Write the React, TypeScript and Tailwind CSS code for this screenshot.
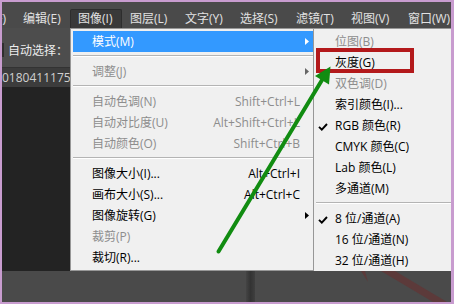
import React from 'react';

type Entry =
  | { t: 'sep' }
  | { t: 'item'; label: string; sc?: string; dis?: boolean; arrow?: boolean; active?: boolean; check?: boolean };

const mainItems: Entry[] = [
  { t: 'item', label: '模式(M)', arrow: true, active: true },
  { t: 'sep' },
  { t: 'item', label: '调整(J)', arrow: true, dis: true },
  { t: 'sep' },
  { t: 'item', label: '自动色调(N)', sc: 'Shift+Ctrl+L', dis: true },
  { t: 'item', label: '自动对比度(U)', sc: 'Alt+Shift+Ctrl+L', dis: true },
  { t: 'item', label: '自动颜色(O)', sc: 'Shift+Ctrl+B', dis: true },
  { t: 'sep' },
  { t: 'item', label: '图像大小(I)...', sc: 'Alt+Ctrl+I' },
  { t: 'item', label: '画布大小(S)...', sc: 'Alt+Ctrl+C' },
  { t: 'item', label: '图像旋转(G)', arrow: true },
  { t: 'item', label: '裁剪(P)', dis: true },
  { t: 'item', label: '裁切(R)...' },
];

const subItems: Entry[] = [
  { t: 'item', label: '位图(B)', dis: true },
  { t: 'item', label: '灰度(G)' },
  { t: 'item', label: '双色调(D)', dis: true },
  { t: 'item', label: '索引颜色(I)...' },
  { t: 'item', label: 'RGB 颜色(R)', check: true },
  { t: 'item', label: 'CMYK 颜色(C)' },
  { t: 'item', label: 'Lab 颜色(L)' },
  { t: 'item', label: '多通道(M)' },
  { t: 'sep' },
  { t: 'item', label: '8 位/通道(A)', check: true },
  { t: 'item', label: '16 位/通道(N)' },
  { t: 'item', label: '32 位/通道(H)' },
];

const menuBar: { label: string; w: string; hover?: boolean }[] = [
  { label: '编辑(E)', w: 'w-[55px]' },
  { label: '图像(I)', w: 'w-[52px]', hover: true },
  { label: '图层(L)', w: 'w-[55px]' },
  { label: '文字(Y)', w: 'w-[55px]' },
  { label: '选择(S)', w: 'w-[56px]' },
  { label: '滤镜(T)', w: 'w-[55px]' },
  { label: '视图(V)', w: 'w-[57px]' },
];

function Arrow({ color }: { color: string }) {
  return (
    <svg width="4" height="7" viewBox="0 0 4 7" className="block">
      <path d="M0 0 L4 3.5 L0 7 Z" fill={color} />
    </svg>
  );
}

function Check() {
  return (
    <svg width="10" height="8" viewBox="0 0 10 8" className="block mt-[3px]">
      <path d="M1 3.8 L3.8 6.6 L9 1" stroke="#000" strokeWidth="1.9" fill="none" />
    </svg>
  );
}

function Sep() {
  return (
    <div className="h-[9px] pt-[3px]">
      <div className="h-px bg-[#b4b4b4]" />
      <div className="h-px bg-white" />
    </div>
  );
}

export default function App() {
  return (
    <div className="relative w-[454px] h-[304px] bg-[#c89ccf] pt-[2px] pl-[2px] pr-[3px] pb-[2px] font-['Open_Sans','Noto_Sans_CJK_SC',sans-serif] text-[12px] leading-[16px] overflow-hidden">
      <div className="w-full h-full flex flex-col bg-[#222222] overflow-hidden">
        {/* menu bar */}
        <div className="h-[26px] shrink-0 bg-[#4a4a4a] flex items-end text-[#e2e2e2] overflow-hidden">
          <div className="w-[13px] h-[19px] shrink-0 overflow-hidden flex justify-end items-center">
            <span className="whitespace-nowrap shrink-0 pr-[9px]">文件(F)</span>
          </div>
          {menuBar.map((m) => (
            <div
              key={m.label}
              className={`${m.w} h-[19px] shrink-0 flex items-center whitespace-nowrap ${
                m.hover ? 'bg-[#393939] border border-b-0 border-[#2d2d2d] rounded-t-[2px] pl-[7px]' : 'pl-[8px]'
              }`}
            >
              {m.label}
            </div>
          ))}
          <div className="flex-1 min-w-0 h-[19px] flex items-center whitespace-nowrap pl-[8px] overflow-hidden">
            窗口(W)
          </div>
        </div>
        {/* options bar */}
        <div className="h-[39px] shrink-0 bg-[#4d4d4d] flex items-start pt-[15px] text-[#ececec]">
          <div className="w-[2px] h-[14px] bg-[#2e2e2e] mr-[4px]" />
          <span className="whitespace-nowrap">自动选择：</span>
        </div>
        {/* tab row */}
        <div className="h-[20px] shrink-0 bg-[#3c3c3c] border-t border-[#333333] flex items-center text-[#cfcfcf]">
          <span className="whitespace-nowrap">0180411175</span>
        </div>
        {/* canvas */}
        <div className="flex-1 bg-[#232323]" />
        {/* bottom panel */}
        <div className="h-[31px] shrink-0 bg-[#4a4a4a] flex">
          <div className="w-[244px] shrink-0" />
          <div className="w-[9px] shrink-0 bg-linear-to-r from-[#444444] via-[#333333] to-[#3f3f3f]" />
          <div className="flex-1 relative">
            <svg width="200" height="31" viewBox="0 0 200 31" className="block">
              <path d="M106 0 L110 0 L113 11 Z" fill="#5b3a3a" />
              <path d="M126 0 L140 0 L192 31 L178 31 Z" fill="#5c3a3a" />
            </svg>
          </div>
        </div>
      </div>

      {/* main dropdown menu */}
      <div className="absolute left-[70px] top-[28px] w-[246px] h-[243px] bg-[#f0f0f0] border border-[#979797] p-[2px] text-black">
        {mainItems.map((it, i) =>
          it.t === 'sep' ? (
            <Sep key={i} />
          ) : (
            <div
              key={i}
              className={`h-[21px] flex items-center pl-[19px] ${
                it.active ? 'bg-[#3399ff] text-white' : it.dis ? 'text-[#8d8d8d]' : 'text-black'
              }`}
            >
              <span className="flex-1 whitespace-nowrap">{it.label}</span>
              {it.sc && <span className="whitespace-nowrap">{it.sc}</span>}
              <span className="w-[13px] pl-[5px] flex items-center">
                {it.arrow && <Arrow color={it.active ? '#ffffff' : it.dis ? '#666666' : '#000000'} />}
              </span>
            </div>
          )
        )}
      </div>

      {/* submenu */}
      <div className="absolute left-[313px] top-[28px] w-[138px] h-[243px] bg-[#f0f0f0] border-l border-t border-[#979797] pt-[2px] pl-[2px] overflow-hidden">
        {subItems.map((it, i) =>
          it.t === 'sep' ? (
            <Sep key={i} />
          ) : (
            <div
              key={i}
              className={`h-[21px] flex items-center ${it.dis ? 'text-[#8d8d8d]' : 'text-black'}`}
            >
              <span className="w-[19px] pl-[2px] flex items-center">{it.check && <Check />}</span>
              <span className="whitespace-nowrap">{it.label}</span>
            </div>
          )
        )}
      </div>

      {/* red highlight box */}
      <div className="absolute left-[316px] top-[48px] w-[98px] h-[25px] border-4 border-[#b3191b]" />

      {/* green arrow */}
      <svg
        className="absolute left-0 top-0 pointer-events-none"
        width="454"
        height="304"
        viewBox="0 0 454 304"
      >
        <line x1="218.5" y1="251.5" x2="322" y2="80" stroke="#118c11" strokeWidth="4" strokeLinecap="round" />
        <path d="M330.5 66.5 L329 84.5 L315 76 Z" fill="#118c11" />
      </svg>
    </div>
  );
}
